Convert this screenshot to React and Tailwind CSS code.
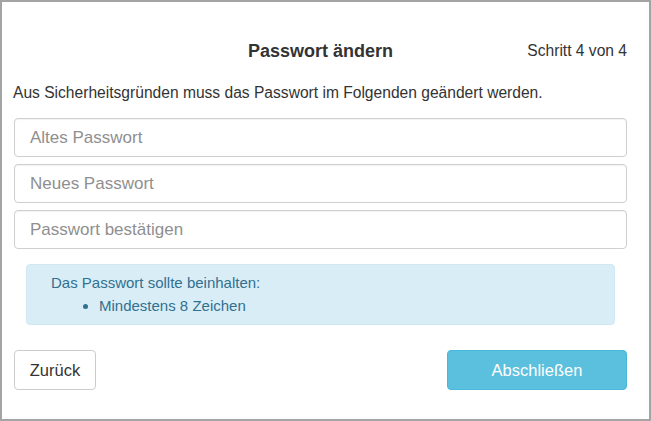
import React from 'react';

const App = () => {
  const fields = ['Altes Passwort', 'Neues Passwort', 'Passwort bestätigen'];

  return (
    <div
      className="w-[651px] h-[421px] bg-white border-2 border-[#a4a4a4] text-[#333] overflow-hidden"
      style={{ fontFamily: '"Liberation Sans", Arial, sans-serif' }}
    >
      {/* Header */}
      <div className="flex items-center pt-[38px] pl-[12px] pr-[22px] h-[60px]">
        <div className="flex-1" />
        <h2 className="text-[18px] font-bold leading-[20px]">Passwort ändern</h2>
        <div className="flex-1 text-right text-[15.6px] leading-[20px]">Schritt 4 von 4</div>
      </div>

      <p className="mt-[21px] pl-[11px] text-[15.6px] leading-[20px]">
        Aus Sicherheitsgründen muss das Passwort im Folgenden geändert werden.
      </p>

      {/* Inputs */}
      <div className="mt-[15px] pl-[12px] pr-[22px] flex flex-col gap-[7px]">
        {fields.map((f) => (
          <input
            key={f}
            type="password"
            placeholder={f}
            className="w-full h-[39px] px-[15px] rounded-[4px] border border-[#cfcfcf] text-[17px] placeholder:text-[#8f8f8f] outline-none shadow-[inset_0_1px_1px_rgba(0,0,0,0.05)]"
          />
        ))}
      </div>

      {/* Info */}
      <div className="mt-[15px] ml-[24px] mr-[34px] h-[61px] rounded-[4px] bg-[#d9edf7] border border-[#cfe8f3] text-[#31708f] text-[15px] pl-[24px] pt-[8px]">
        <div className="leading-[20px]">Das Passwort sollte beinhalten:</div>
        <ul className="list-disc pl-[48px] mt-[3px] leading-[20px]">
          <li>Mindestens 8 Zeichen</li>
        </ul>
      </div>

      {/* Buttons */}
      <div className="mt-[25px] pl-[12px] pr-[22px] flex justify-between">
        <button className="h-[40px] w-[82px] rounded-[4px] border border-[#cccccc] bg-white text-[16.5px] text-[#333]">
          Zurück
        </button>
        <button className="h-[40px] w-[180px] rounded-[4px] border border-[#46b8da] bg-[#5bc0de] text-[16.5px] text-white">
          Abschließen
        </button>
      </div>
    </div>
  );
};

export default App;
